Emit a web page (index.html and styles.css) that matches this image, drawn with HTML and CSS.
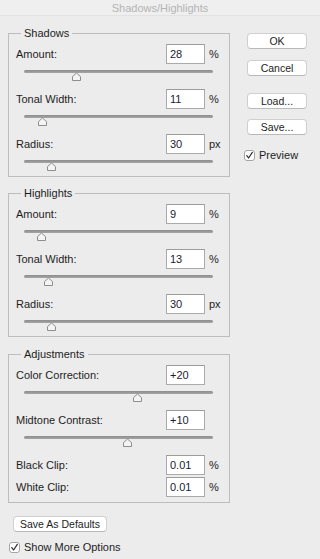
FILE: index.html
```html
<!DOCTYPE html>
<html>
<head>
<meta charset="utf-8">
<link rel="stylesheet" href="styles.css">
</head>
<body>
<div class="window">
  <div class="titlebar">Shadows/Highlights</div>
  <div class="content">
    <div class="left">
      <fieldset class="group first">
        <legend>Shadows</legend>
        <div class="row"><span class="label">Amount:</span><span class="field">28</span><span class="unit">%</span></div>
        <div class="slider"><div class="track"><svg class="thumb" style="left:28%" width="11" height="9" viewBox="0 0 11 9"><path d="M1.5 8.5 V4.6 L5.5 1 L9.5 4.6 V8.5 Z"/></svg></div></div>
        <div class="row"><span class="label">Tonal Width:</span><span class="field">11</span><span class="unit">%</span></div>
        <div class="slider"><div class="track"><svg class="thumb" style="left:10%" width="11" height="9" viewBox="0 0 11 9"><path d="M1.5 8.5 V4.6 L5.5 1 L9.5 4.6 V8.5 Z"/></svg></div></div>
        <div class="row"><span class="label">Radius:</span><span class="field">30</span><span class="unit">px</span></div>
        <div class="slider last"><div class="track"><svg class="thumb" style="left:14.8%" width="11" height="9" viewBox="0 0 11 9"><path d="M1.5 8.5 V4.6 L5.5 1 L9.5 4.6 V8.5 Z"/></svg></div></div>
      </fieldset>
      <fieldset class="group second">
        <legend>Highlights</legend>
        <div class="row"><span class="label">Amount:</span><span class="field">9</span><span class="unit">%</span></div>
        <div class="slider"><div class="track"><svg class="thumb" style="left:9%" width="11" height="9" viewBox="0 0 11 9"><path d="M1.5 8.5 V4.6 L5.5 1 L9.5 4.6 V8.5 Z"/></svg></div></div>
        <div class="row"><span class="label">Tonal Width:</span><span class="field">13</span><span class="unit">%</span></div>
        <div class="slider"><div class="track"><svg class="thumb" style="left:12.7%" width="11" height="9" viewBox="0 0 11 9"><path d="M1.5 8.5 V4.6 L5.5 1 L9.5 4.6 V8.5 Z"/></svg></div></div>
        <div class="row"><span class="label">Radius:</span><span class="field">30</span><span class="unit">px</span></div>
        <div class="slider last"><div class="track"><svg class="thumb" style="left:14.8%" width="11" height="9" viewBox="0 0 11 9"><path d="M1.5 8.5 V4.6 L5.5 1 L9.5 4.6 V8.5 Z"/></svg></div></div>
      </fieldset>
      <fieldset class="group third">
        <legend>Adjustments</legend>
        <div class="row"><span class="label">Color Correction:</span><span class="field">+20</span><span class="unit"></span></div>
        <div class="slider"><div class="track"><svg class="thumb" style="left:59.8%" width="11" height="9" viewBox="0 0 11 9"><path d="M1.5 8.5 V4.6 L5.5 1 L9.5 4.6 V8.5 Z"/></svg></div></div>
        <div class="row"><span class="label">Midtone Contrast:</span><span class="field">+10</span><span class="unit"></span></div>
        <div class="slider"><div class="track"><svg class="thumb" style="left:55%" width="11" height="9" viewBox="0 0 11 9"><path d="M1.5 8.5 V4.6 L5.5 1 L9.5 4.6 V8.5 Z"/></svg></div></div>
        <div class="row"><span class="label">Black Clip:</span><span class="field">0.01</span><span class="unit">%</span></div>
        <div class="row tight"><span class="label">White Clip:</span><span class="field">0.01</span><span class="unit">%</span></div>
      </fieldset>
      <div class="btn defaults">Save As Defaults</div>
      <div class="check more">
        <svg class="box" width="11" height="11" viewBox="0 0 11 11"><rect x="0.5" y="0.5" width="10" height="10" rx="2.5"/><path class="tick" d="M2.8 5.6 L4.6 8 L8.3 2.4"/></svg>
        <span>Show More Options</span>
      </div>
    </div>
    <div class="right">
      <div class="btn ok">OK</div>
      <div class="btn cancel">Cancel</div>
      <div class="btn load">Load...</div>
      <div class="btn save">Save...</div>
      <div class="check preview">
        <svg class="box" width="11" height="11" viewBox="0 0 11 11"><rect x="0.5" y="0.5" width="10" height="10" rx="2.5"/><path class="tick" d="M2.8 5.6 L4.6 8 L8.3 2.4"/></svg>
        <span>Preview</span>
      </div>
    </div>
  </div>
</div>
</body>
</html>
```

FILE: styles.css
```css
html, body {
  margin: 0;
  padding: 0;
  background: #ececec;
}
.window {
  width: 320px;
  height: 559px;
  background: #ececec;
  font-family: "Liberation Sans", Arial, sans-serif;
  font-size: 11px;
  color: #1d1d1d;
  overflow: hidden;
}
.titlebar {
  height: 15px;
  padding-top: 1px;
  line-height: 15px;
  text-align: center;
  color: #b4b4b4;
  background: #efefef;
  border-bottom: 1px solid #e2e2e2;
  box-sizing: border-box;
  height: 16px;
}
.content {
  display: flex;
  padding-left: 8px;
}
.left {
  width: 222px;
  display: flex;
  flex-direction: column;
}
.group {
  margin: 0;
  padding: 0 7px 5px 7px;
  border: 1px solid #bdbdbd;
  min-width: 0;
}
.group.first { margin-top: 10px; }
.group.second { margin-top: 9px; }
.group.third { margin-top: 10px; }
.group legend {
  padding: 0 3px;
  margin-left: 5px;
  line-height: 14px;
  height: 14px;
  font-size: 11px;
  color: #1d1d1d;
}
.row {
  display: flex;
  align-items: center;
  height: 20px;
}
.group legend + .row { margin-top: 4px; }
.row.tight { margin-top: 2px; }
.label {
  flex: 1;
  white-space: nowrap;
}
.field {
  width: 39px;
  height: 20px;
  box-sizing: border-box;
  background: #fff;
  border: 1px solid #aaaaaa;
  border-top-color: #9c9c9c;
  padding-left: 3px;
  line-height: 18px;
  color: #1b2233;
}
.unit {
  width: 13px;
  margin-left: 4px;
}
.slider {
  height: 25px;
  box-sizing: border-box;
  padding: 6px 9px 0 8px;
}
.slider.last { height: 17px; }
.track {
  position: relative;
  height: 3px;
  border-radius: 2px;
  background: linear-gradient(#8c8c8c, #a6a6a6);
}
.thumb {
  position: absolute;
  top: 2px;
  margin-left: -5.5px;
  display: block;
}
.thumb path {
  fill: #f4f4f4;
  stroke: #8d8d8d;
  stroke-width: 1;
  stroke-linejoin: round;
}
.btn {
  height: 16px;
  box-sizing: border-box;
  background: #fff;
  border: 1px solid #cfcfcf;
  border-bottom-color: #b9b9b9;
  border-radius: 4px;
  text-align: center;
  line-height: 14px;
  font-size: 10.5px;
  color: #1d1d1d;
}
.defaults {
  margin-top: 13px;
  margin-left: 5px;
  width: 94px;
}
.check {
  display: flex;
  align-items: center;
  gap: 4px;
  height: 14px;
  font-size: 11px;
}
.check .box rect {
  fill: #fff;
  stroke: #a5a5a5;
}
.check .tick {
  fill: none;
  stroke: #2b2b2b;
  stroke-width: 1.2;
  stroke-linecap: round;
  stroke-linejoin: round;
}
.more {
  margin-top: 8px;
  margin-left: 1px;
}
.right {
  margin-left: 14px;
  width: 63px;
  display: flex;
  flex-direction: column;
}
.right .btn {
  margin-left: 3px;
  width: 60px;
}
.ok { margin-top: 17px; }
.cancel { margin-top: 11px; }
.load { margin-top: 17px; }
.save { margin-top: 10px; }
.preview { margin-top: 13px; }
```
